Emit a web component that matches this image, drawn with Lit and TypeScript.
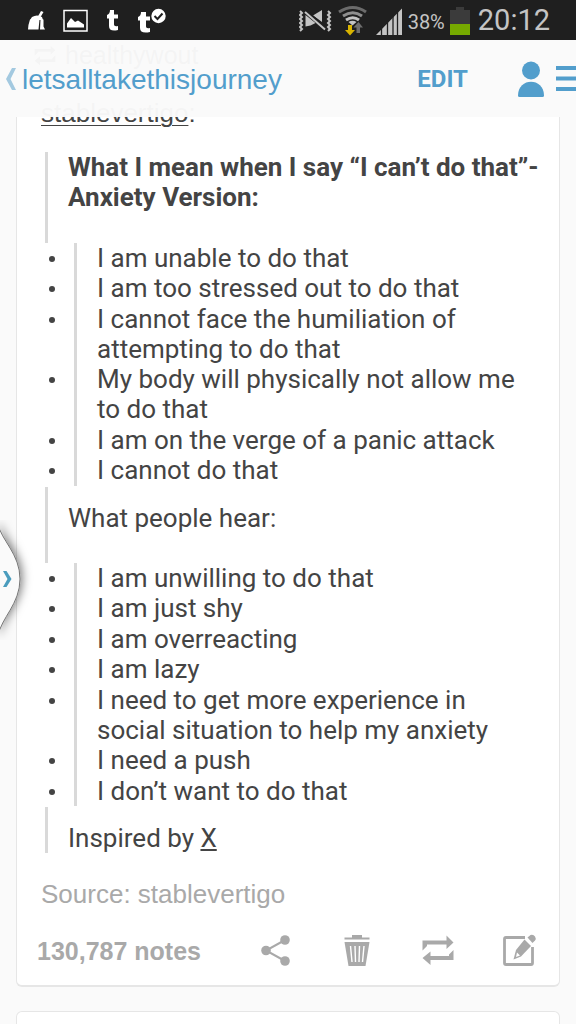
import { LitElement, html, css, svg } from "lit";
import { customElement, property } from "lit/decorators.js";

const meant = [
  "I am unable to do that",
  "I am too stressed out to do that",
  "I cannot face the humiliation of attempting to do that",
  "My body will physically not allow me to do that",
  "I am on the verge of a panic attack",
  "I cannot do that",
];

const heard = [
  "I am unwilling to do that",
  "I am just shy",
  "I am overreacting",
  "I am lazy",
  "I need to get more experience in social situation to help my anxiety",
  "I need a push",
  "I don’t want to do that",
];

@customElement("status-bar")
class StatusBar extends LitElement {
  static styles = css`
    :host {
      display: flex;
      align-items: center;
      justify-content: space-between;
      height: 40px;
      padding: 0 26px;
      background: #1f1f1f;
      color: #c4c4c4;
      font-family: Roboto, sans-serif;
    }
    .group {
      display: flex;
      align-items: center;
    }
    .left {
      gap: 17px;
    }
    .right {
      gap: 5px;
    }
    svg {
      display: block;
    }
    .percent {
      font-size: 20px;
      line-height: 24px;
      padding-top: 3px;
    }
    .clock {
      font-size: 29px;
      line-height: 38px;
      margin-left: 3px;
    }
  `;
  render() {
    return html`
      <div class="group left">
        <svg width="20" height="40" viewBox="0 0 20 40" fill="#fff">
          <path d="M15 11l2.500 1-3.500 6h-3z" />
          <path d="M6 17q5-3 10 0l1 3H4z" />
          <path d="M4 19.500h9.500l-1 10H2q.200-5 2-10zM14.500 19.500h3v7l1.500 3h-5z" />
        </svg>
        <svg width="26" height="40" viewBox="0 0 26 40">
          <rect x="1" y="10.500" width="23" height="20.500" fill="none" stroke="#fff" stroke-width="1.500" />
          <path d="M4 27.500v-4l4-5.500 4 4 3-1.500 6 4v3z" fill="#fff" />
        </svg>
        <svg width="14" height="40" viewBox="0 0 14 40" fill="#fff">
          <path d="M4 10h4v4.500h4v4H8v6q0 2.500 4 1.500v4q-9 2-9-4v-7.500H1V15q3-1 3-5z" />
        </svg>
        <svg width="30" height="40" viewBox="0 0 30 40" fill="#fff">
          <path d="M4 12h5v4.500h4v4H9v6q0 2.500 4 1.500v4q-10 2-10-4v-7.500H1V17q3-1 3-5z" />
          <circle cx="21.500" cy="16" r="7.200" />
          <path d="M17.500 16l3 3 5-5.500" fill="none" stroke="#1f1f1f" stroke-width="2" />
        </svg>
      </div>
      <div class="group right">
        <svg width="34" height="40" viewBox="0 0 34 40" fill="#c4c4c4">
          <path d="M6.500 15l10 8-5 2.500-5 1z" />
          <path d="M14 15.500l9-5.500v12z" />
          <path d="M6 11l21 18" stroke="#1f1f1f" stroke-width="4" />
          <path d="M6 12l20 17.500" stroke="#c4c4c4" stroke-width="2" />
          <path d="M1 11l2 2-2 2 2 2-2 2 2 2-2 2 2 2-2 2 2 2-2 2" fill="none" stroke="#c4c4c4" stroke-width="2" />
          <path d="M29 11l2 2-2 2 2 2-2 2 2 2-2 2 2 2-2 2 2 2-2 2" fill="none" stroke="#c4c4c4" stroke-width="2" />
        </svg>
        <svg width="32" height="40" viewBox="0 0 32 40" fill="none">
          <path d="M1 12q14-9 27 0" stroke="#6b6b6b" stroke-width="3" />
          <path d="M5 16q10-6.500 19 0" stroke="#8f8f8f" stroke-width="3" />
          <path d="M8 20q7-4.500 13 0" stroke="#c4c4c4" stroke-width="3" />
          <path d="M10.500 22q4-2.500 8 0l-4 3.500z" fill="#c4c4c4" />
          <path d="M10 25h4v5h3l-5 5.500L7 30h3z" fill="#d9b400" />
          <path d="M18.500 33v-5.500h-3l5-5.500 4.500 5.500h-3V33z" fill="#6e6e6e" />
        </svg>
        <svg width="28" height="40" viewBox="0 0 28 40" fill="#c4c4c4">
          <path d="M1 35L27 8.500V35z" />
          <path d="M6.500 26v9M12.500 20v15M18 14v21M22.500 10v25" stroke="#1f1f1f" stroke-width="1.300" />
        </svg>
        <span class="percent">38%</span>
        <svg width="20" height="40" viewBox="0 0 20 40">
          <path d="M6 7h8v3h6v14H0V10h6z" fill="#3b3b3b" />
          <path d="M0 24h20v11H0z" fill="#76a900" />
        </svg>
        <span class="clock">20:12</span>
      </div>
    `;
  }
}

@customElement("blog-header")
class BlogHeader extends LitElement {
  @property() name = "";
  static styles = css`
    :host {
      display: flex;
      align-items: center;
      height: 77px;
      background: rgba(250, 250, 250, 0.97);
      color: #529ecc;
    }
    a,
    button {
      color: inherit;
      background: none;
      border: 0;
      padding: 0;
      text-decoration: none;
    }
    svg {
      display: block;
    }
    .back {
      display: flex;
      align-items: center;
      gap: 5px;
      padding: 2px 0 0 5px;
      margin-right: auto;
      font: 28px/32px "Liberation Sans", Arial, sans-serif;
    }
    .edit {
      font: bold 24px/32px Roboto, sans-serif;
      margin-right: 49px;
    }
    .menu {
      margin-left: 10px;
    }
  `;
  render() {
    return html`
      <a class="back" href="#">
        <svg width="12" height="24" viewBox="0 0 12 24" aria-hidden="true">
          <path d="M7 0h4L5.500 11 11 22H7L1 11z" fill="#a3c9e0" />
        </svg>
        ${this.name}
      </a>
      <button class="edit">EDIT</button>
      <button aria-label="Account">
        <svg width="28" height="36" viewBox="0 0 28 36" fill="#529ecc">
          <circle cx="14" cy="9.500" r="9" />
          <path d="M1 34.500C1 16 27 16 27 34.500q0 1.500-1.500 1.500h-23Q1 36 1 34.500z" />
        </svg>
      </button>
      <button class="menu" aria-label="Menu">
        <svg width="21" height="28" viewBox="0 0 21 28" fill="#529ecc">
          <path d="M1 1h20v4H1zM1 11.500h20v4H1zM1 22h20v4H1z" />
        </svg>
      </button>
    `;
  }
}

const reblog = svg`<path d="M2.500 17.500V7.500h24V2.500l7 7-7 6.500v-4.500H7V13z" />
  <path d="M33.500 17v10h-23v5l-8-7 8-6.500v4.500H29v-1.500z" />`;

const actions = [
  {
    label: "Share",
    icon: svg`<path d="M27 7L8 17.500 27 28" fill="none" stroke="#a9a9a9" stroke-width="2" />
      <circle cx="27" cy="7" r="4.800" /><circle cx="8" cy="17.500" r="4.800" /><circle cx="27" cy="28" r="4.800" />`,
  },
  {
    label: "Delete",
    icon: svg`<path d="M13 2h10v2.500h7.500V6.500h-25V4.500H13z" />
      <path d="M5.500 9h25L26.500 33h-17z" />
      <path d="M11.500 13l1.500 16M16 13l.500 16M20.500 13L20 29M25 13l-1.500 16" stroke="#fff" stroke-width="1.400" fill="none" />`,
  },
  { label: "Reblog", icon: reblog },
  {
    label: "Edit",
    icon: svg`<path d="M24 4.500H5Q3.500 4.500 3.500 6v24q0 1.500 1.500 1.500h25q1.500 0 1.500-1.500V14" fill="none" stroke="#a9a9a9" stroke-width="2.800" />
      <path d="M23.500 6.500l6.500 6.500L20 23.500l-7.500 3 2.500-9.500z" />
      <path d="M16 19.500l3 3-4 1.500z" fill="#fff" />
      <path d="M26.500 4.500l3-2.500q3-.800 4.500 1.500t0 4l-2.500 2.500z" />`,
  },
];

@customElement("app-root")
class AppRoot extends LitElement {
  static styles = css`
    :host {
      display: flex;
      flex-direction: column;
      position: relative;
      height: 100vh;
      overflow: hidden;
      background: #fafafa;
      color: #444;
      font: 26px/30px Roboto, sans-serif;
    }
    a {
      color: inherit;
    }
    svg {
      display: block;
    }
    blog-header {
      position: absolute;
      top: 40px;
      left: 0;
      right: 0;
      z-index: 1;
    }
    main {
      flex: 1;
      min-height: 0;
      overflow: hidden;
      padding: 0 16px;
    }
    .card {
      box-sizing: border-box;
      background: #fff;
      border: 1px solid #e6e6e6;
      border-bottom-width: 2px;
      border-radius: 6px;
    }
    .post {
      border-top: 0;
      border-radius: 0 0 6px 6px;
      padding: 0 20px 16px;
      margin-bottom: 24px;
    }
    .body {
      padding-left: 4px;
    }
    .next {
      height: 80px;
    }
    .via,
    .author,
    .source {
      font-family: "Liberation Sans", Arial, sans-serif;
      font-size: 26px;
      line-height: 30px;
    }
    .via {
      display: flex;
      gap: 8px;
      margin-left: -8px;
      font-size: 25px;
    }
    .author {
      padding: 26px 0 24px;
    }
    .author a {
      text-underline-offset: 3px;
      text-decoration-thickness: 1px;
    }
    h1,
    p {
      margin: 0;
      font-size: 26px;
      line-height: 30px;
    }
    blockquote {
      margin: 0 0 0 4px;
      padding-left: 20px;
      border-left: 3px solid #d9d9d9;
    }
    .lead {
      margin-top: 4px;
      padding-bottom: 31px;
    }
    .lead h1 {
      margin-top: -4px;
    }
    .aside {
      padding-top: 16px;
    }
    .open {
      padding-bottom: 30px;
    }
    ul {
      list-style: none;
      margin: 0 0 1px;
      padding: 0 8px;
    }
    li {
      display: flex;
      align-items: flex-start;
      gap: 19px;
    }
    li::before {
      content: "";
      flex: none;
      width: 6px;
      height: 6px;
      margin-top: 13px;
      border-radius: 50%;
      background: #444;
    }
    li span {
      flex: 1;
      border-left: 3px solid #d9d9d9;
      padding-left: 20px;
    }
    li:nth-child(even) span {
      padding-bottom: 1px;
    }
    .source {
      margin-top: 26px;
      color: #a9a9a9;
    }
    footer {
      display: flex;
      align-items: center;
      justify-content: space-between;
      margin-top: 24px;
      padding-right: 2px;
      color: #a9a9a9;
      font: bold 25px/36px "Liberation Sans", Arial, sans-serif;
    }
    .actions {
      display: flex;
      gap: 45px;
    }
    .actions button {
      background: none;
      border: 0;
      padding: 0;
    }
    .drawer {
      position: absolute;
      top: 520px;
      left: 0;
      z-index: 2;
      padding: 0;
      border: 0;
      background: none;
    }
  `;

  list(items: string[]) {
    return html`<ul>
      ${items.map((t) => html`<li><span>${t}</span></li>`)}
    </ul>`;
  }

  render() {
    return html`
      <status-bar></status-bar>
      <blog-header name="letsalltakethisjourney"></blog-header>
      <main>
        <article class="card post">
          <div class="body">
            <div class="via">
              <svg width="24" height="32" viewBox="0 0 36 36" fill="#444" aria-hidden="true">${reblog}</svg>
              healthywout
            </div>
            <div class="author"><a href="#">stablevertigo</a>:</div>
            <blockquote class="lead">
              <h1>What I mean when I say “I can’t do that”- Anxiety Version:</h1>
            </blockquote>
            ${this.list(meant)}
            <blockquote class="aside open"><p>What people hear:</p></blockquote>
            ${this.list(heard)}
            <blockquote class="aside"><p>Inspired by <a href="#">X</a></p></blockquote>
            <p class="source">Source: stablevertigo</p>
          </div>
          <footer>
            <span>130,787 notes</span>
            <div class="actions">
              ${actions.map(
                (a) => html`<button aria-label=${a.label}>
                  <svg width="36" height="36" viewBox="0 0 36 36" fill="#a9a9a9">${a.icon}</svg>
                </button>`
              )}
            </div>
          </footer>
        </article>
        <div class="card next"></div>
      </main>
      <button class="drawer" aria-label="Open drawer">
        <svg width="48" height="120" viewBox="0 0 48 120">
          <defs>
            <filter id="shade" x="-50%" y="-20%" width="240%" height="140%">
              <feDropShadow dx="2" dy="-1" stdDeviation="5" flood-color="#000" flood-opacity="0.5" />
            </filter>
          </defs>
          <path d="M-2 4C1 20 20 34 20 59S1 98-2 116z" fill="#fafafa" stroke="#777" stroke-width="1" filter="url(#shade)" />
          <path d="M3 51h3.500l5 8-5 8H3l4.500-8z" fill="#4a9cbd" />
        </svg>
      </button>
    `;
  }
}
